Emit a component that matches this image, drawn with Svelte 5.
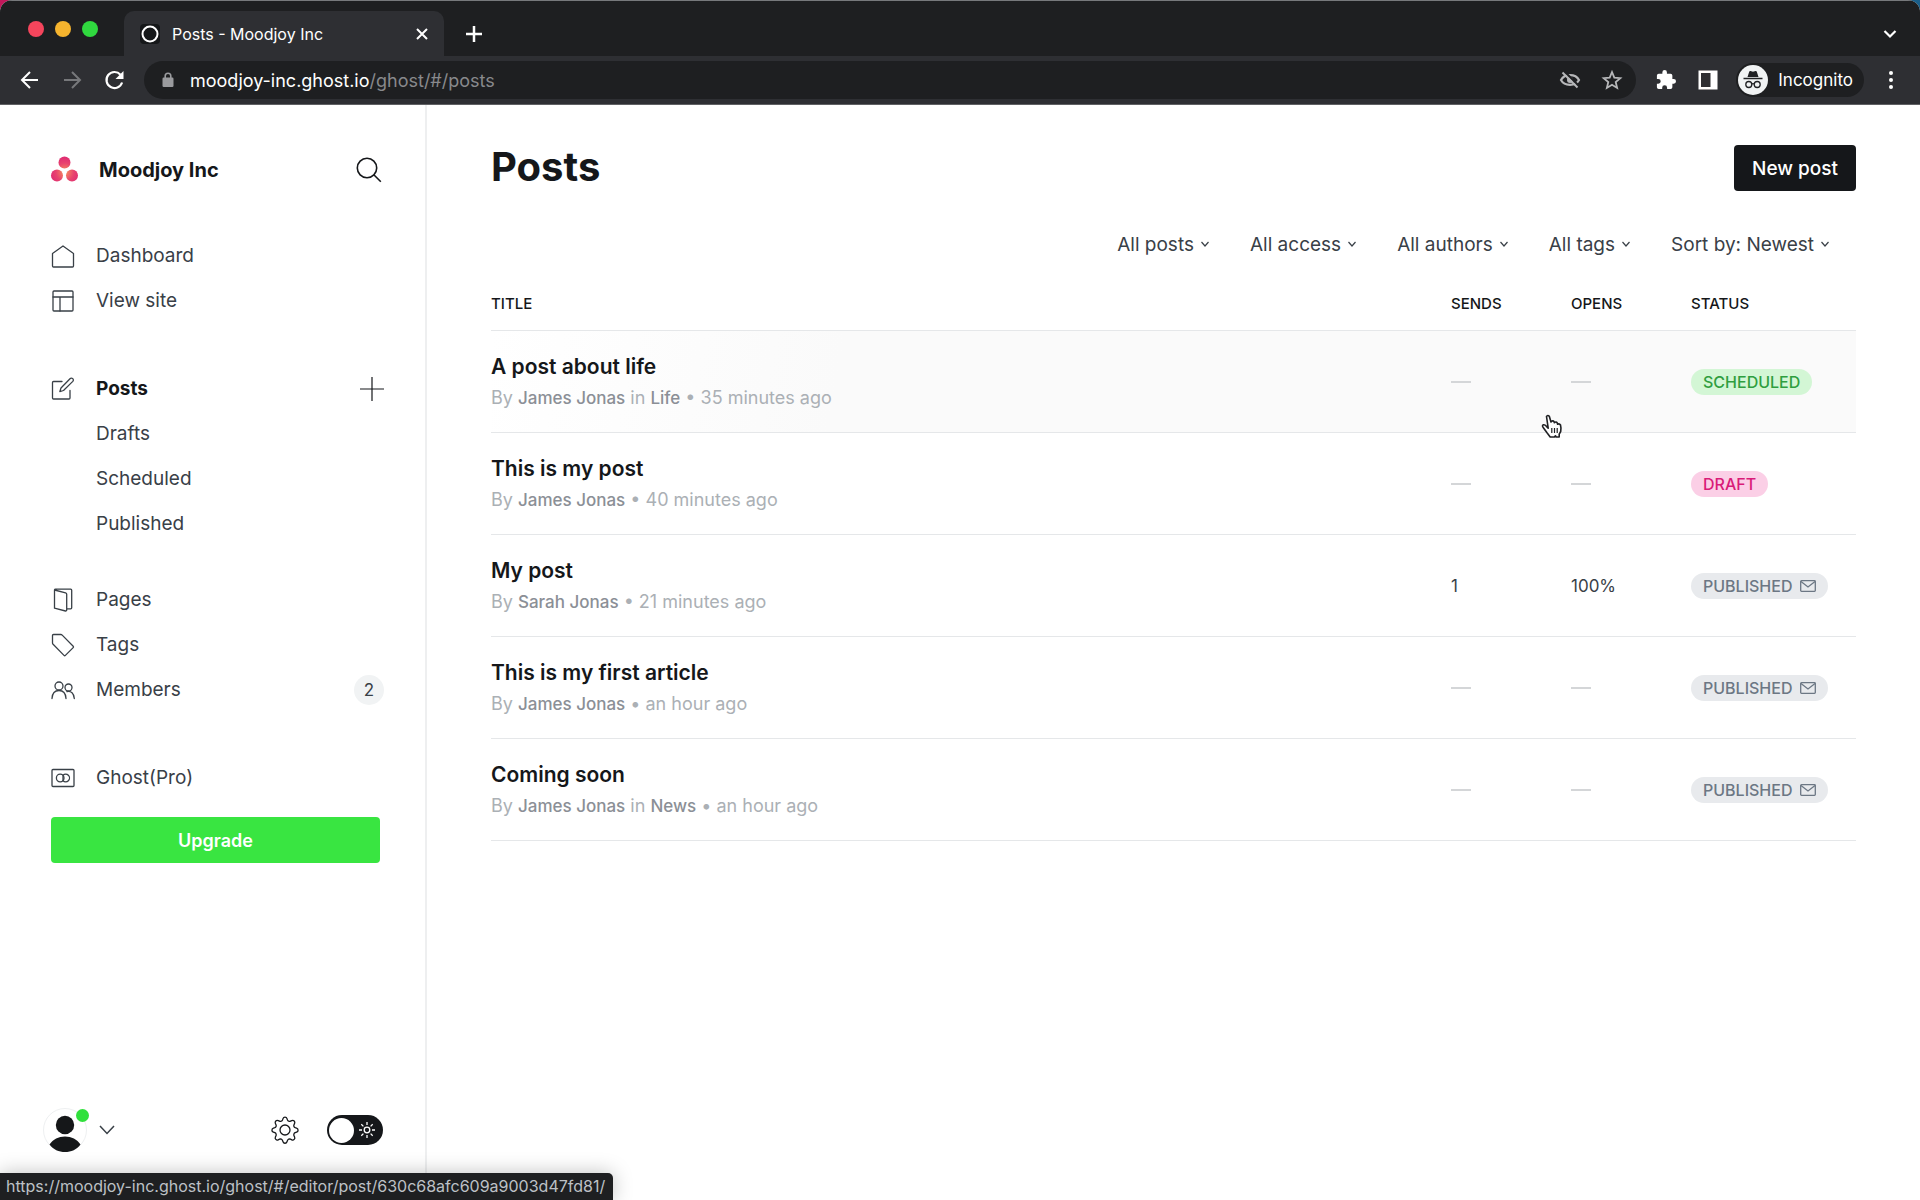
<script lang="ts">
    type Status = "scheduled" | "draft" | "published";

    interface Post {
        title: string;
        author: string;
        tag?: string;
        time: string;
        sends?: string;
        opens?: string;
        status: Status;
        hovered?: boolean;
    }

    const posts: Post[] = [
        { title: "A post about life", author: "James Jonas", tag: "Life", time: "35 minutes ago", status: "scheduled", hovered: true },
        { title: "This is my post", author: "James Jonas", time: "40 minutes ago", status: "draft" },
        { title: "My post", author: "Sarah Jonas", time: "21 minutes ago", sends: "1", opens: "100%", status: "published" },
        { title: "This is my first article", author: "James Jonas", time: "an hour ago", status: "published" },
        { title: "Coming soon", author: "James Jonas", tag: "News", time: "an hour ago", status: "published" },
    ];

    const filters = ["All posts", "All access", "All authors", "All tags", "Sort by: Newest"];
    const postViews = ["Drafts", "Scheduled", "Published"];

    let nightShift = $state(false);
</script>

{#snippet icon(name: string)}
    <svg class="icon" viewBox="0 0 24 24" aria-hidden="true">
        {#if name === "home"}
            <path d="M1.500 9.500 12 2l10.500 7.500V22a1 1 0 0 1-1 1h-19a1 1 0 0 1-1-1z" />
        {:else if name === "site"}
            <rect x="2" y="2" width="20" height="20" rx="1" />
            <path d="M2 8h20M9 8v14" />
        {:else if name === "posts"}
            <path d="M11 4.500H2.500a1 1 0 0 0-1 1V21a1 1 0 0 0 1 1H18a1 1 0 0 0 1-1v-7.500" />
            <path d="m10 11 9-9.300a1.900 1.900 0 0 1 2.800 2.700L12.500 13.500 8.800 14.600z" />
        {:else if name === "pages"}
            <path d="M3.500 2v18.200l11 2.800a1 1 0 0 0 1.200-1V6.200a1.500 1.500 0 0 0-1.100-1.400L3.500 2a1 1 0 0 1 1-.8h15.200a1 1 0 0 1 1 1v17.600a1 1 0 0 1-1 1h-4" />
        {:else if name === "tags"}
            <path d="M1.500 2.500a1 1 0 0 1 1-1h7.300a2 2 0 0 1 1.400.6l11 11.100a1 1 0 0 1 0 1.400l-7.800 7.800a1 1 0 0 1-1.400 0L2.100 11.300a2 2 0 0 1-.6-1.400z" />
        {:else if name === "members"}
            <circle cx="8" cy="8" r="4" />
            <path d="M1 20.500c.3-5 3-8 7-8s6.700 3 7 8" />
            <circle cx="17.500" cy="9.500" r="3.500" />
            <path d="M16 13.500c4-1 7 2 7.300 7" />
        {:else if name === "pro"}
            <rect x="1" y="3.500" width="22" height="17" rx="1" />
            <circle cx="9.200" cy="12" r="3.800" />
            <path d="M12 9.300a3.800 3.800 0 1 1 0 5.400z" />
        {/if}
    </svg>
{/snippet}

{#snippet chevron()}
    <svg class="chevron" viewBox="0 0 10 10" aria-hidden="true"><path d="m1.500 3 3.500 4 3.500-4" /></svg>
{/snippet}

<div class="browser">
    <header class="chrome">
        <div class="tab-strip">
            <div class="lights"><span class="red"></span><span class="amber"></span><span class="green"></span></div>
            <div class="tab">
                <svg class="favicon" viewBox="0 0 20 20" aria-hidden="true"><rect width="20" height="20" rx="4" fill="#151719" /><circle cx="10" cy="10" r="7.500" fill="none" stroke="#fff" stroke-width="2" /></svg>
                <span>Posts - Moodjoy Inc</span>
                <button class="chrome-button close" aria-label="Close tab">
                    <svg viewBox="0 0 16 16"><path d="m3 3 10 10M13 3 3 13" /></svg>
                </button>
            </div>
            <button class="chrome-button" aria-label="New tab">
                <svg viewBox="0 0 20 20"><path d="M10 2v16M2 10h16" stroke-width="2.500" /></svg>
            </button>
            <button class="chrome-button tab-search" aria-label="Search tabs">
                <svg viewBox="0 0 20 20"><path d="m4.500 7 5.500 5.500L15.500 7" stroke-width="2.200" /></svg>
            </button>
        </div>
        <div class="toolbar">
            <button class="chrome-button" aria-label="Back">
                <svg viewBox="0 0 20 20"><path d="M18 10H2M10 2l-8 8 8 8" /></svg>
            </button>
            <button class="chrome-button dim" aria-label="Forward">
                <svg viewBox="0 0 20 20"><path d="M2 10h16M10 2l8 8-8 8" /></svg>
            </button>
            <button class="chrome-button" aria-label="Reload">
                <svg viewBox="0 0 20 20"><path d="M18.100 12.500A8 8 0 1 1 16.500 4.700" stroke-width="2.200" /><path d="M19.500 1v8h-8z" fill="currentColor" stroke="none" /></svg>
            </button>
            <div class="address">
                <svg class="lock" viewBox="0 0 12 16" aria-hidden="true"><rect x="0.500" y="5.500" width="11" height="9.500" rx="1.200" fill="#9a9b9e" /><path d="M3.200 7V4a2.800 2.800 0 0 1 5.600 0v3" fill="none" stroke="#9a9b9e" stroke-width="1.600" /></svg>
                <span class="url">moodjoy-inc.ghost.io<span>/ghost/#/posts</span></span>
                <button class="chrome-button muted" aria-label="Third-party cookies blocked">
                    <svg viewBox="0 0 20 20"><path d="M1 10c3.500-6.500 14.500-6.500 18 0-3.500 6.500-14.500 6.500-18 0z" stroke-width="2.200" /><circle cx="10" cy="10" r="3" fill="currentColor" stroke="none" /><path d="M4.500 1.500 19 16" stroke="#1e1f21" stroke-width="2.200" /><path d="m2.500 2.500 15 15" /></svg>
                </button>
                <button class="chrome-button muted" aria-label="Bookmark this tab">
                    <svg viewBox="0 0 20 20"><path d="m10 2 2.300 5.600 6 .5-4.600 3.900 1.400 5.900-5.100-3.200-5.100 3.200L6.300 12 1.700 8.100l6-.5z" stroke-width="1.800" /></svg>
                </button>
            </div>
            <button class="chrome-button" aria-label="Extensions">
                <svg viewBox="1 1 22 22"><path d="M20.500 11H19V7a2 2 0 0 0-2-2h-4V3.500a2.500 2.500 0 0 0-5 0V5H4a2 2 0 0 0-2 2v3.800h1.500a2.700 2.700 0 0 1 0 5.400H2V20a2 2 0 0 0 2 2h3.800v-1.500a2.700 2.700 0 0 1 5.400 0V22H17a2 2 0 0 0 2-2v-4h1.500a2.500 2.500 0 0 0 0-5z" fill="currentColor" stroke="none" /></svg>
            </button>
            <button class="chrome-button" aria-label="Side panel">
                <svg viewBox="0 0 20 20"><path d="M.5.500h19v19H.5zM3 3v14h9.500V3z" fill="currentColor" fill-rule="evenodd" stroke="none" /></svg>
            </button>
            <div class="incognito">
                <svg viewBox="0 0 30 30" aria-hidden="true">
                    <circle cx="15" cy="15" r="15" fill="#f1f3f4" />
                    <path d="m9.500 12 1.700-5.300q.3-1 1.300-.7l2.500.7 2.500-.7q1-.3 1.300.7l1.700 5.300z" fill="#202124" />
                    <path d="M5.500 13.500h19" stroke="#202124" stroke-width="1.500" />
                    <circle cx="10.800" cy="19.500" r="3" fill="none" stroke="#202124" stroke-width="1.300" />
                    <circle cx="19.200" cy="19.500" r="3" fill="none" stroke="#202124" stroke-width="1.300" />
                    <path d="M13.800 19q1.200-.8 2.400 0" fill="none" stroke="#202124" stroke-width="1.200" />
                </svg>
                <span>Incognito</span>
            </div>
            <button class="chrome-button" aria-label="Browser menu">
                <svg viewBox="0 0 20 20"><g fill="currentColor" stroke="none"><circle cx="10" cy="3" r="2" /><circle cx="10" cy="10" r="2" /><circle cx="10" cy="17" r="2" /></g></svg>
            </button>
        </div>
    </header>

    <div class="app">
        <aside class="sidebar">
            <div class="site">
                <svg class="logo" viewBox="0 0 28 26" aria-hidden="true">
                    <defs>
                        <radialGradient id="logo-fill" gradientUnits="userSpaceOnUse" cx="14" cy="15" r="15">
                            <stop offset="0" stop-color="#f7925a" />
                            <stop offset="0.600" stop-color="#e8436f" />
                            <stop offset="1" stop-color="#df2d72" />
                        </radialGradient>
                    </defs>
                    <g fill="url(#logo-fill)"><circle cx="13.500" cy="5.500" r="6" /><circle cx="6" cy="18.500" r="6" /><circle cx="21" cy="18.500" r="6" /></g>
                </svg>
                <span class="site-name">Moodjoy Inc</span>
                <button class="icon-button" aria-label="Search site">
                    <svg viewBox="0 0 26 26"><circle cx="11" cy="11" r="9.700" /><path d="m17.800 17.800 7 7" /></svg>
                </button>
            </div>

            <nav>
                <ul>
                    <li><a href="#/dashboard">{@render icon("home")}Dashboard</a></li>
                    <li><a href="#/site">{@render icon("site")}View site</a></li>
                </ul>
                <ul class="spaced">
                    <li>
                        <a class="active" href="#/posts">{@render icon("posts")}Posts</a>
                        <button class="icon-button add" aria-label="New post">
                            <svg viewBox="0 0 24 24"><path d="M12 0v24M0 12h24" /></svg>
                        </button>
                    </li>
                    {#each postViews as view}
                        <li><a class="sub" href="#/posts?type={view.toLowerCase()}">{view}</a></li>
                    {/each}
                </ul>
                <ul class="near">
                    <li><a href="#/pages">{@render icon("pages")}Pages</a></li>
                    <li><a href="#/tags">{@render icon("tags")}Tags</a></li>
                    <li><a href="#/members">{@render icon("members")}Members</a><span class="count">2</span></li>
                </ul>
                <ul class="spaced">
                    <li><a href="#/pro">{@render icon("pro")}Ghost(Pro)</a></li>
                </ul>
                <button class="upgrade">Upgrade</button>
            </nav>

            <footer>
                <button class="user" aria-label="User menu">
                    <span class="avatar">
                        <svg viewBox="0 0 44 44" aria-hidden="true">
                            <circle cx="22" cy="22" r="21.500" fill="#fff" stroke="#eef0f1" />
                            <circle cx="22" cy="17" r="9.200" fill="#151719" />
                            <path d="M6.500 36.500c3.500-5.300 9-8 15.500-8s12 2.700 15.500 8C34 41.500 28 44 22 44S10 41.500 6.500 36.500z" fill="#151719" />
                        </svg>
                        <span class="notice"></span>
                    </span>
                    <svg class="caret" viewBox="0 0 16 10" aria-hidden="true"><path d="m1 1 7 7.500L15 1" /></svg>
                </button>
                <a class="settings" href="#/settings" aria-label="Settings">
                    <svg viewBox="0 0 28 28" aria-hidden="true">
                        <circle cx="14" cy="14" r="5" />
                        <path d="M12 2.600a2.100 2.100 0 0 1 4 0l.5 1.400a2.200 2.200 0 0 0 3 1.200l1.300-.6a2.100 2.100 0 0 1 2.800 2.800l-.6 1.300a2.200 2.200 0 0 0 1.200 3l1.400.5a2.100 2.100 0 0 1 0 4l-1.400.5a2.200 2.200 0 0 0-1.200 3l.6 1.300a2.100 2.100 0 0 1-2.800 2.800l-1.300-.6a2.200 2.200 0 0 0-3 1.200l-.5 1.400a2.100 2.100 0 0 1-4 0l-.5-1.400a2.200 2.200 0 0 0-3-1.200l-1.300.6a2.100 2.100 0 0 1-2.800-2.800l.6-1.300a2.200 2.200 0 0 0-1.200-3l-1.400-.5a2.100 2.100 0 0 1 0-4l1.400-.5a2.200 2.200 0 0 0 1.200-3l-.6-1.300a2.100 2.100 0 0 1 2.800-2.800l1.300.6a2.200 2.200 0 0 0 3-1.200z" />
                    </svg>
                </a>
                <label class="night">
                    <input type="checkbox" bind:checked={nightShift} aria-label="Night shift" />
                    <span class="knob"></span>
                    <svg viewBox="0 0 16 16" aria-hidden="true"><circle cx="8" cy="8" r="2.800" /><path d="M8 0v3M8 13v3M0 8h3M13 8h3M2.300 2.300l2.100 2.100M11.600 11.600l2.100 2.100M2.300 13.700l2.100-2.100M11.600 4.400l2.100-2.100" /></svg>
                </label>
            </footer>
        </aside>

        <main>
            <div class="heading">
                <h1>Posts</h1>
                <button class="new-post">New post</button>
            </div>
            <div class="filters">
                {#each filters as filter}
                    <button>{filter}{@render chevron()}</button>
                {/each}
            </div>
            <table>
                <thead>
                    <tr>
                        <th>Title</th>
                        <th class="metric">Sends</th>
                        <th class="metric">Opens</th>
                        <th class="status">Status</th>
                    </tr>
                </thead>
                <tbody>
                    {#each posts as post}
                        <tr class:hovered={post.hovered}>
                            <td>
                                <h3><a href="#/editor/post">{post.title}</a></h3>
                                <p>
                                    By <b>{post.author}</b>
                                    {#if post.tag}in <b>{post.tag}</b>{/if}
                                    • {post.time}
                                </p>
                            </td>
                            <td>{#if post.sends}{post.sends}{:else}<span class="empty"></span>{/if}</td>
                            <td>
                                {#if post.opens}{post.opens}{:else}<span class="empty"></span>{/if}
                                {#if post.hovered}
                                    <svg class="pointer" viewBox="0 0 22 24" aria-hidden="true">
                                        <path d="M5.500 2.500q1.200-2 2.800-.2L10 8l.5-.8q1.600-1 2.600.5l.3 1q1.600-1.400 2.900.3l.3 1.200q1.800-1 2.900.8.900 3.300.2 6.500l-1.500 2.700V23h-3l-.8-1.200-1 1.200H9.200l-3.200-4.200-3.800-5.300q-1.500-2 .2-2.700 1.400-.4 2.800 1.300l2 2.100z" fill="#fff" stroke="#202124" stroke-width="1.600" stroke-linejoin="round" />
                                        <path d="M10.800 14v5M13.500 14v5M16.200 14v5" stroke="#202124" stroke-width="1.200" />
                                    </svg>
                                {/if}
                            </td>
                            <td>
                                <span class="badge {post.status}">
                                    {post.status}
                                    {#if post.status === "published"}
                                        <svg viewBox="0 0 16 12" aria-hidden="true"><rect x="0.700" y="0.700" width="14.600" height="10.600" rx="0.800" /><path d="m1 1.500 7 5.500 7-5.500" /></svg>
                                    {/if}
                                </span>
                            </td>
                        </tr>
                    {/each}
                </tbody>
            </table>
        </main>
    </div>
    <div class="link-status">https://moodjoy-inc.ghost.io/ghost/#/editor/post/630c68afc609a9003d47fd81/</div>
</div>

<style>
    :global(body) {
        margin: 0;
        background: linear-gradient(90deg, #c2185b 50%, #1a5f8a 50%);
    }

    .browser,
    .browser * {
        box-sizing: border-box;
    }

    .browser {
        position: relative;
        display: flex;
        flex-direction: column;
        min-height: 100vh;
        font-family: Inter, "Liberation Sans", sans-serif;
        font-size: 19px;
        color: #394047;
        background: #fff;
        border-radius: 12px 12px 0 0;
        overflow: hidden;
    }

    button {
        padding: 0;
        border: none;
        background: transparent;
        color: inherit;
        font: inherit;
        cursor: pointer;
    }

    a {
        color: inherit;
        text-decoration: none;
    }

    svg {
        display: block;
        flex-shrink: 0;
        overflow: visible;
    }

    /* browser window */
    .chrome {
        color: #fff;
        font-size: 16px;
        background: #1e1f21;
        border-top: 1px solid #77797c;
        border-bottom: 1px solid #606164;
    }

    .tab-strip {
        display: flex;
        align-items: flex-end;
        gap: 20px;
        height: 55px;
        padding: 0 20px 0 28px;
    }

    .lights {
        display: flex;
        align-self: center;
        gap: 11px;
        margin-right: 6px;
    }

    .lights span {
        width: 16px;
        height: 16px;
        border-radius: 50%;
    }

    .lights .red {
        background: #f5455c;
    }

    .lights .amber {
        background: #f6b42e;
    }

    .lights .green {
        background: #30d93f;
    }

    .tab {
        display: flex;
        align-items: center;
        gap: 12px;
        width: 320px;
        height: 45px;
        padding: 0 12px 0 16px;
        border-radius: 10px 10px 0 0;
        background: #2e2f33;
    }

    .favicon {
        width: 20px;
        height: 20px;
    }

    .chrome-button {
        display: flex;
        align-items: center;
        justify-content: center;
        width: 20px;
        height: 20px;
        flex-shrink: 0;
    }

    .tab-strip > .chrome-button {
        height: 45px;
    }

    .chrome-button svg {
        width: 20px;
        height: 20px;
        fill: none;
        stroke: currentColor;
        stroke-width: 2;
    }

    .chrome-button.close {
        margin-left: auto;
    }

    .chrome-button.close svg {
        width: 16px;
        height: 16px;
    }

    .tab-search {
        margin-left: auto;
    }

    .dim {
        color: #77787b;
    }

    .muted {
        color: #b6b7b9;
    }

    .toolbar {
        display: flex;
        align-items: center;
        gap: 22px;
        height: 48px;
        padding: 0 19px 0 20px;
        background: #2e2f33;
    }

    .address {
        display: flex;
        flex: 1;
        align-items: center;
        gap: 22px;
        height: 38px;
        margin: 0 -2px;
        padding: 0 14px 0 18px;
        border-radius: 20px;
        background: #1e1f21;
    }

    .lock {
        width: 12px;
        height: 16px;
    }

    .url {
        flex: 1;
        margin-left: -6px;
        font-size: 18px;
    }

    .url span {
        color: #88898c;
    }

    .incognito {
        display: flex;
        align-items: center;
        gap: 10px;
        height: 34px;
        margin: 0 -5px 0 -4px;
        padding: 0 11px 0 2px;
        border-radius: 17px;
        background: #1e1f21;
        font-size: 17px;
    }

    .incognito svg {
        width: 30px;
        height: 30px;
    }

    /* admin */
    .app {
        display: flex;
        flex: 1;
    }

    .sidebar {
        display: flex;
        flex-direction: column;
        width: 427px;
        flex-shrink: 0;
        padding: 45px 41px 48px 51px;
        border-right: 2px solid #eeeff0;
    }

    .site {
        display: flex;
        align-items: center;
        height: 40px;
        padding-right: 2px;
    }

    .logo {
        width: 28px;
        height: 26px;
    }

    .site-name {
        margin-left: 20px;
        color: #15171a;
        font-size: 20px;
        font-weight: 700;
    }

    .icon-button {
        margin-left: auto;
        color: #15171a;
    }

    .icon-button svg {
        width: 26px;
        height: 26px;
        fill: none;
        stroke: currentColor;
        stroke-width: 1.6;
    }

    .icon-button.add svg {
        width: 24px;
        height: 24px;
        stroke-width: 1.2;
    }

    nav {
        margin-top: 43px;
    }

    ul {
        margin: 0;
        padding: 0;
        list-style: none;
    }

    ul.spaced {
        margin-top: 43px;
    }

    ul.near {
        margin-top: 31px;
    }

    li {
        display: flex;
        align-items: center;
        height: 45px;
    }

    li a {
        display: flex;
        align-items: center;
        gap: 21px;
    }

    li a.sub {
        padding-left: 45px;
    }

    li a.active {
        color: #15171a;
        font-weight: 700;
    }

    .icon {
        width: 24px;
        height: 24px;
        fill: none;
        stroke: #394047;
        stroke-width: 1.3;
        stroke-linejoin: round;
        stroke-linecap: round;
    }

    .count {
        display: flex;
        align-items: center;
        justify-content: center;
        width: 30px;
        height: 30px;
        margin-left: auto;
        border-radius: 50%;
        background: #f1f3f4;
        font-size: 17px;
    }

    .upgrade {
        width: calc(100% - 4px);
        height: 46px;
        margin-top: 17px;
        border-radius: 4px;
        background: #39e541;
        color: #fff;
        font-size: 18px;
        font-weight: 600;
    }

    .sidebar footer {
        display: flex;
        align-items: center;
        margin: auto 0 0 -8px;
        padding-right: 1px;
    }

    .user {
        display: flex;
        align-items: center;
        gap: 12px;
    }

    .avatar {
        position: relative;
    }

    .avatar svg {
        width: 44px;
        height: 44px;
    }

    .notice {
        position: absolute;
        top: 1px;
        right: -2px;
        width: 13px;
        height: 13px;
        border-radius: 50%;
        background: #30e03c;
    }

    .caret {
        width: 16px;
        height: 10px;
        fill: none;
        stroke: #394047;
        stroke-width: 1.5;
    }

    .settings {
        margin-left: auto;
    }

    .settings svg {
        width: 28px;
        height: 28px;
        fill: none;
        stroke: #15171a;
        stroke-width: 1.3;
    }

    .night {
        position: relative;
        display: flex;
        align-items: center;
        justify-content: space-between;
        width: 56px;
        height: 30px;
        margin-left: 28px;
        padding: 0 8px 0 2px;
        border-radius: 15px;
        background: #15171a;
    }

    .night input {
        position: absolute;
        inset: 0;
        width: 100%;
        height: 100%;
        margin: 0;
        opacity: 0;
        cursor: pointer;
    }

    .knob {
        width: 25px;
        height: 25px;
        border-radius: 50%;
        background: #fff;
    }

    .night svg {
        width: 16px;
        height: 16px;
        fill: none;
        stroke: #fff;
        stroke-width: 1.3;
    }

    main {
        flex: 1;
        min-width: 0;
        padding: 40px 64px;
    }

    .heading {
        display: flex;
        align-items: flex-start;
        justify-content: space-between;
    }

    h1 {
        margin: 0;
        color: #15171a;
        font-size: 40px;
        font-weight: 700;
        line-height: 44px;
    }

    .new-post {
        height: 46px;
        padding: 0 18px;
        border-radius: 4px;
        background: #15171a;
        color: #fff;
        font-weight: 500;
    }

    .filters {
        display: flex;
        justify-content: flex-end;
        gap: 40px;
        padding: 41px 26px 0 0;
    }

    .filters button {
        display: flex;
        align-items: center;
        gap: 6px;
        height: 24px;
    }

    .chevron {
        width: 10px;
        height: 10px;
        fill: none;
        stroke: #394047;
        stroke-width: 1.2;
    }

    table {
        width: 100%;
        margin-top: 20px;
        border-collapse: collapse;
        table-layout: fixed;
    }

    th {
        height: 54px;
        padding: 2px 0 0;
        border-bottom: 1px solid #e5e7e9;
        color: #15171a;
        font-size: 15px;
        font-weight: 500;
        text-align: left;
        text-transform: uppercase;
    }

    th.metric {
        width: 120px;
    }

    th.status {
        width: 165px;
    }

    td {
        position: relative;
        height: 102px;
        padding: 2px 0 0;
        border-bottom: 1px solid #e5e7e9;
        font-size: 17px;
        vertical-align: middle;
    }

    tr.hovered {
        background: linear-gradient(100deg, #fff 0, #fafafa 350px);
    }

    h3 {
        margin: 0;
        color: #15171a;
        font-size: 21px;
        font-weight: 600;
        line-height: 32px;
    }

    p {
        margin: 0;
        color: #abb0b5;
        font-size: 18px;
        line-height: 30px;
    }

    p b {
        color: #8b8f96;
        font-size: 17px;
        font-weight: 500;
    }

    .empty {
        display: block;
        width: 20px;
        height: 2px;
        background: #d4d6d8;
    }

    .pointer {
        position: absolute;
        bottom: -6px;
        left: -30px;
        width: 22px;
        height: 24px;
    }

    .badge {
        display: inline-flex;
        align-items: center;
        gap: 8px;
        height: 26px;
        padding: 0 12px;
        border-radius: 13px;
        font-size: 16px;
        font-weight: 500;
        text-transform: uppercase;
    }

    .badge svg {
        width: 16px;
        height: 12px;
        fill: none;
        stroke: currentColor;
        stroke-width: 1.3;
    }

    .scheduled {
        background: #d3f6d5;
        color: #2f9e3f;
    }

    .draft {
        background: #fbcfe6;
        color: #d91b78;
    }

    .published {
        background: #e8eaed;
        color: #6c7784;
    }

    .link-status {
        position: absolute;
        bottom: 0;
        left: 0;
        height: 27px;
        padding: 0 8px 0 6px;
        border-radius: 0 5px 0 0;
        background: #1e1f21;
        box-shadow: 0 0 20px rgba(0, 0, 0, 0.25);
        color: #bdc1c6;
        font-size: 16px;
        line-height: 27px;
    }
</style>
